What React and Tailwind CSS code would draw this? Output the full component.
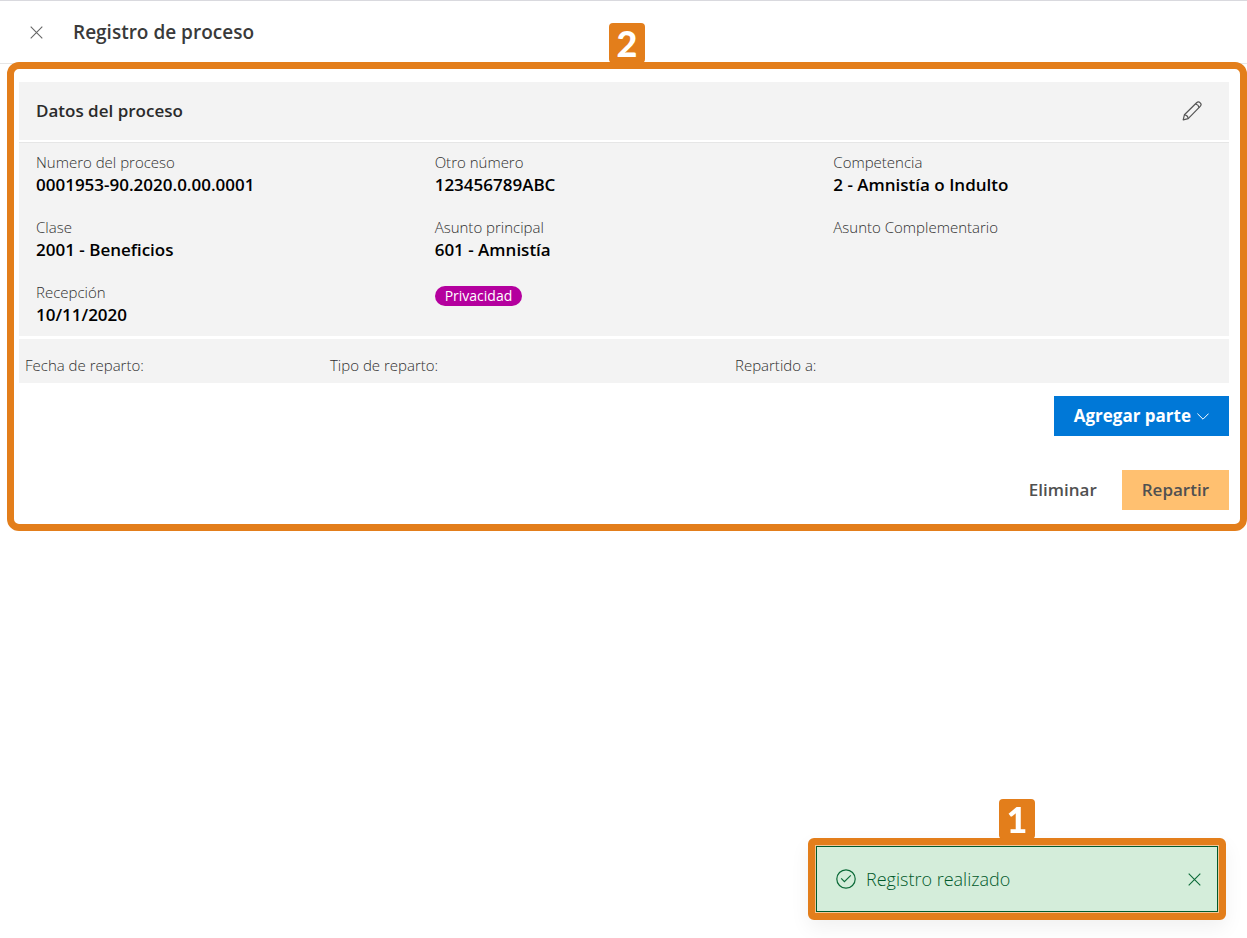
import React from "react";

const font = "font-['Open_Sans','Noto_Sans',sans-serif]";

function CloseIcon() {
  return (
    <svg width="13" height="13" viewBox="0 0 13 13" fill="none" stroke="currentColor" strokeWidth="1.1" aria-hidden="true">
      <path d="M0.7 0.7L12.3 12.3M12.3 0.7L0.7 12.3" />
    </svg>
  );
}

function PencilIcon() {
  return (
    <svg width="20" height="20" viewBox="0 0 20 20" fill="none" stroke="currentColor" strokeWidth="1.2" strokeLinejoin="round" aria-hidden="true">
      <path d="M1.2 18.8L2.4 13.8L14.6 1.8C15.6 0.8 17.2 0.8 18.2 1.8C19.2 2.8 19.2 4.4 18.2 5.4L6.2 17.6Z" />
      <path d="M2.4 13.8C4.4 14 6 15.6 6.2 17.6M13.4 3C15 3.2 16.8 5 17 6.6" />
    </svg>
  );
}

function CheckCircleIcon() {
  return (
    <svg width="20" height="20" viewBox="0 0 20 20" fill="none" stroke="currentColor" strokeWidth="1.2" aria-hidden="true">
      <circle cx="10" cy="10" r="9.2" />
      <path d="M5.2 9.4L8.4 12.6L14.8 6.4" />
    </svg>
  );
}

function ChevronIcon() {
  return (
    <svg width="12" height="7" viewBox="0 0 12 7" fill="none" stroke="currentColor" strokeWidth="1" aria-hidden="true">
      <path d="M0.4 0.6L6 6.2L11.6 0.6" />
    </svg>
  );
}

function StepBadge({ children }) {
  return (
    <span className="absolute bottom-full left-1/2 mb-1.5 flex h-10 w-9 -translate-x-1/2 items-center justify-center rounded bg-[#e37e1b] font-['Lato',sans-serif] text-4xl font-black text-white">
      {children}
    </span>
  );
}

function Field({ label, value }) {
  return (
    <div className="h-[65px]">
      <dt className="text-[15px] leading-[22px] font-light text-[#303030]">{label}</dt>
      <dd className="text-[17px] leading-6 font-semibold text-black">{value}</dd>
    </div>
  );
}

export default function App() {
  return (
    <div className={`min-h-screen bg-white ${font}`}>
      <header className="flex h-16 items-center border-t border-b border-t-[#d9d9de] border-b-[#e6e6e6] pl-[30px]">
        <button type="button" aria-label="Cerrar" className="text-[#666]">
          <CloseIcon />
        </button>
        <h1 className="ml-[30px] text-[19px] font-semibold text-[#3a3a3a]">Registro de proceso</h1>
      </header>

      <main className="relative -mt-0.5 ml-[7px] rounded-xl border-[7px] border-[#e37e1b] bg-white pt-[13px] pr-[11px] pb-3.5 pl-[5px]">
        <StepBadge>2</StepBadge>
        <section className="flex flex-col">
          <div className="flex h-[58px] items-center justify-between bg-[#f3f3f3] pr-[27px] pl-[17px]">
            <h2 className="text-[17px] font-semibold text-[#2b2b2b]">Datos del proceso</h2>
            <button type="button" aria-label="Editar" className="text-[#555]">
              <PencilIcon />
            </button>
          </div>
          <dl className="mt-0.5 grid grid-cols-3 gap-x-5 border-t border-[#e6e6e6] bg-[#f3f3f3] px-[17px]">
            <div className="pt-2">
              <Field label="Numero del proceso" value="0001953-90.2020.0.00.0001" />
              <Field label="Clase" value="2001 - Beneficios" />
              <div className="h-[55px]">
                <Field label="Recepción" value="10/11/2020" />
              </div>
            </div>
            <div className="pt-2">
              <Field label="Otro número" value="123456789ABC" />
              <Field label="Asunto principal" value="601 - Amnistía" />
              <span className="mt-[5px] inline-flex h-5 items-center rounded-full bg-[#b4009e] px-2.5 text-sm text-white">
                Privacidad
              </span>
            </div>
            <div className="pt-2">
              <Field label="Competencia" value="2 - Amnistía o Indulto" />
              <Field label="Asunto Complementario" value="" />
            </div>
          </dl>
          <div className="mt-[3px] grid h-11 grid-cols-[305fr_405fr_494fr] items-end bg-[#f3f3f3] pb-[7px] pl-1.5 text-[15px] leading-[22px] font-light text-[#303030]">
            <span>Fecha de reparto:</span>
            <span>Tipo de reparto:</span>
            <span>Repartido a:</span>
          </div>
        </section>

        <div className="mt-[13px] flex justify-end">
          <button type="button" className="flex h-10 items-center gap-1.5 bg-[#0078d7] px-5 text-[17px] font-bold text-white">
            Agregar parte
            <ChevronIcon />
          </button>
        </div>
        <div className="mt-[34px] flex justify-end gap-[25px]">
          <button type="button" className="h-10 text-[17px] font-semibold text-[#505050]">Eliminar</button>
          <button type="button" className="h-10 bg-[#ffc070] px-5 text-[17px] font-semibold text-[#505050]">Repartir</button>
        </div>
      </main>

      <aside className="fixed right-[21px] bottom-[18px] w-[418px] rounded-md border-[7px] border-[#e37e1b] bg-[#f3c596] p-px shadow-[0_8px_20px_rgba(0,0,0,0.06)]">
        <StepBadge>1</StepBadge>
        <div role="status" className="flex h-[66px] items-center border border-[#005a2b] bg-[#d4edda] px-[19px] text-[#0b6a38]">
          <CheckCircleIcon />
          <span className="ml-2.5 flex-1 text-lg font-light text-[#005a2b]">Registro realizado</span>
          <button type="button" aria-label="Cerrar aviso" className="mr-[-3px]">
            <CloseIcon />
          </button>
        </div>
      </aside>
    </div>
  );
}
